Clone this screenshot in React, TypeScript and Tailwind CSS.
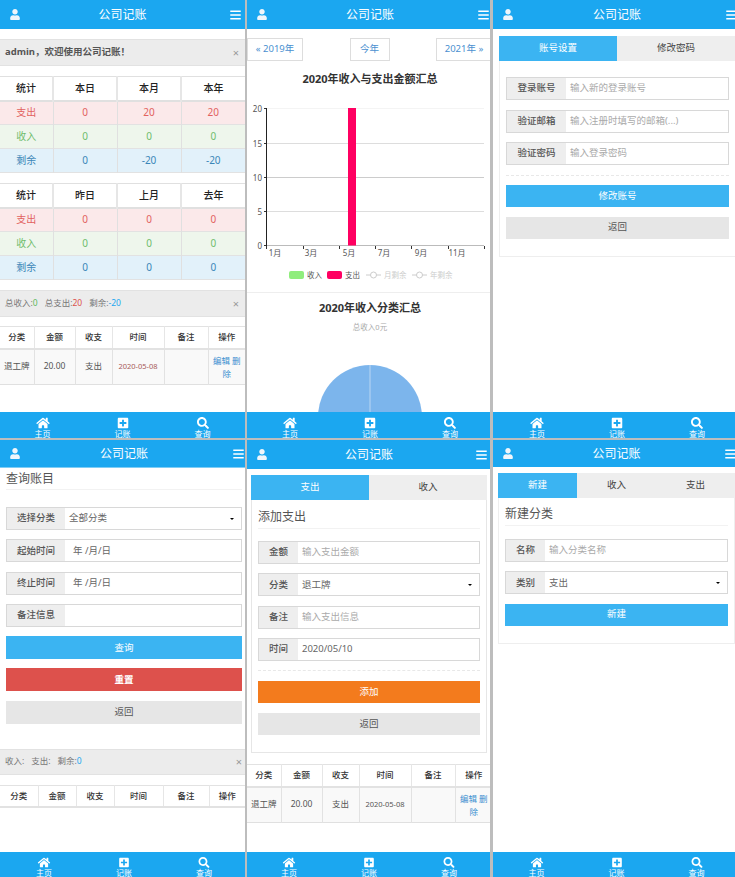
import React from 'react';
import { FaBars, FaHome, FaPlusSquare, FaSearch, FaUser } from 'react-icons/fa';

const Header = ({ h = 'h-[29px]' }: { h?: string }) => (
  <div className={`${h} shrink-0 bg-[#1ba7f0] flex items-center text-white`}>
    <div className="w-[25px] pl-[10px] shrink-0">
      <FaUser className="w-[10px] h-[11px] text-[#f0f6fb]" />
    </div>
    <span className="flex-1 text-center text-[12px]">公司记账</span>
    <div className="w-[25px] pr-[4px] shrink-0 flex justify-end">
      <FaBars className="w-[11px] h-[12px]" />
    </div>
  </div>
);

const Footer = ({ h = 'h-[26px]' }: { h?: string }) => (
  <div className={`${h} mt-auto shrink-0 bg-[#1ba7f0] flex justify-center text-white overflow-hidden`}>
    {[
      { icon: <FaHome className="w-[14px] h-[12px]" />, label: '主页' },
      { icon: <FaPlusSquare className="w-[12px] h-[12px]" />, label: '记账' },
      { icon: <FaSearch className="w-[12px] h-[12px]" />, label: '查询' },
    ].map((item) => (
      <div key={item.label} className="w-20 flex flex-col items-center pt-[5px]">
        {item.icon}
        <span className="text-[8px] leading-[9px]">{item.label}</span>
      </div>
    ))}
  </div>
);

const Alert = ({ children, h = 'h-[27px]' }: { children: React.ReactNode; h?: string }) => (
  <div className={`${h} shrink-0 bg-[#ececec] border-y border-[#e2e2e2] flex items-center justify-between pl-[5px] pr-[6px]`}>
    <div className="text-[8.5px] text-[#777] whitespace-nowrap">{children}</div>
    <span className="text-[11px] leading-none text-[#999]">×</span>
  </div>
);

const statRows = [
  { name: '支出', bg: 'bg-[#fbe9ea]', text: 'text-[#e2625f]' },
  { name: '收入', bg: 'bg-[#eef6ec]', text: 'text-[#70bd6c]' },
  { name: '剩余', bg: 'bg-[#e2f1fa]', text: 'text-[#3b87b8]' },
];

const StatTable = ({ heads, rows }: { heads: string[]; rows: string[][] }) => (
  <table className="w-[245px] table-fixed border-collapse text-center text-[10px] shrink-0">
    <colgroup>
      <col className="w-[53px]" />
      <col className="w-[64px]" />
      <col className="w-[64px]" />
      <col className="w-[64px]" />
    </colgroup>
    <thead>
      <tr className="h-[24px] border-t border-b-2 border-[#e0e0e0]">
        {heads.map((h, i) => (
          <th key={h} className={`p-0 font-medium text-[#222] ${i > 0 ? 'border-l-2 border-[#e6e6e6]' : ''}`}>
            {h}
          </th>
        ))}
      </tr>
    </thead>
    <tbody>
      {statRows.map((row, r) => (
        <tr key={row.name} className={`h-[24px] border-b border-[#e2e2e2] ${row.bg} ${row.text}`}>
          <td className="p-0">{row.name}</td>
          {rows[r].map((v, i) => (
            <td key={i} className="p-0 border-l border-[#e0e0e0]">
              {v}
            </td>
          ))}
        </tr>
      ))}
    </tbody>
  </table>
);

const RecordTable = ({
  widths,
  record,
  dateColor = 'text-[#555]',
}: {
  widths: string[];
  record?: boolean;
  dateColor?: string;
}) => (
  <table className="w-[245px] table-fixed border-collapse text-center text-[8.5px] shrink-0">
    <colgroup>
      {widths.map((w, i) => (
        <col key={i} className={w} />
      ))}
    </colgroup>
    <thead>
      <tr className="h-[22px] border-t border-b-2 border-[#e2e2e2]">
        {['分类', '金额', '收支', '时间', '备注', '操作'].map((h, i) => (
          <th key={h} className={`p-0 font-medium text-[#333] ${i > 0 ? 'border-l border-[#e6e6e6]' : ''}`}>
            {h}
          </th>
        ))}
      </tr>
    </thead>
    {record && (
      <tbody>
        <tr className="h-[36px] bg-[#f9f9f9] border-b border-[#e0e0e0] text-[#555]">
          <td className="p-0">退工牌</td>
          <td className="p-0 border-l border-[#e2e2e2]">20.00</td>
          <td className="p-0 border-l border-[#e2e2e2]">支出</td>
          <td className={`p-0 border-l border-[#e2e2e2] text-[7.5px] ${dateColor}`}>2020-05-08</td>
          <td className="p-0 border-l border-[#e2e2e2]"></td>
          <td className="px-[3px] py-0 border-l border-[#e2e2e2] text-[#3b8fd0] leading-[13px]">编辑 删除</td>
        </tr>
      </tbody>
    )}
  </table>
);

const FormRow = ({
  label,
  labelW,
  value,
  muted,
  select,
  pad = 'pl-[4px]',
}: {
  label: string;
  labelW: string;
  value?: string;
  muted?: boolean;
  select?: boolean;
  pad?: string;
}) => (
  <div className="h-[23px] shrink-0 flex border border-[#d8d8d8] text-[9.5px]">
    <div className={`${labelW} shrink-0 bg-[#eeeeee] flex items-center justify-center font-medium text-[#555]`}>{label}</div>
    <div className={`flex-1 bg-white flex items-center justify-between ${pad} pr-[7px] ${muted ? 'text-[#aaa]' : 'text-[#666]'}`}>
      <span>{value}</span>
      {select && <span className="w-0 h-0 border-x-[2px] border-t-[2px] border-x-transparent border-t-black" />}
    </div>
  </div>
);

const Btn = ({ color, children }: { color: string; children: React.ReactNode }) => (
  <div className={`h-[22px] shrink-0 flex items-center justify-center text-[9.5px] ${color}`}>{children}</div>
);

const Tabs = ({ items, widths }: { items: string[]; widths: string }) => (
  <div className={`h-[25px] shrink-0 flex text-[9.5px] ${widths}`}>
    {items.map((t, i) => (
      <div
        key={t}
        className={`flex-1 flex items-center justify-center ${i === 0 ? 'bg-[#3bb4f2] text-white' : 'bg-[#eeeeee] text-[#444]'}`}
      >
        {t}
      </div>
    ))}
  </div>
);

const Phone = ({ outer, inner, children }: { outer: string; inner: string; children: React.ReactNode }) => (
  <section className={`${outer} h-full overflow-hidden bg-white shrink-0`}>
    <div className={`${inner} h-full flex flex-col`}>{children}</div>
  </section>
);

const Chart = () => {
  const grid = [
    { y: 8.5, label: '20', stroke: '#f4f4f4' },
    { y: 43.5, label: '15', stroke: '#dddddd' },
    { y: 77.5, label: '10', stroke: '#cccccc' },
    { y: 111.5, label: '5', stroke: '#dddddd' },
    { y: 145.5, label: '0', stroke: '#bbbbbb' },
  ];
  const months = [
    { x: 28, t: '1月' },
    { x: 64, t: '3月' },
    { x: 102, t: '5月' },
    { x: 137, t: '7月' },
    { x: 174, t: '9月' },
    { x: 210, t: '11月' },
  ];
  return (
    <svg width="243" height="192" viewBox="0 0 243 192" className="block shrink-0">
      {grid.map((g) => (
        <g key={g.label}>
          <line x1="19" x2="237" y1={g.y} y2={g.y} stroke={g.stroke} strokeWidth="1" />
          <line x1="17" x2="19" y1={g.y} y2={g.y} stroke="#333" strokeWidth="1" />
          <text x="15" y={g.y + 3} textAnchor="end" fontSize="8" fill="#555">
            {g.label}
          </text>
        </g>
      ))}
      <line x1="19.5" x2="19.5" y1="8" y2="146" stroke="#222" strokeWidth="1" />
      {[19, 56, 92, 128, 164, 201, 237].map((x) => (
        <line key={x} x1={x + 0.5} x2={x + 0.5} y1="146" y2="149" stroke="#333" strokeWidth="1" />
      ))}
      {months.map((m) => (
        <text key={m.t} x={m.x} y="156" textAnchor="middle" fontSize="8" fill="#555">
          {m.t}
        </text>
      ))}
      <rect x="101" y="8" width="8" height="137.5" fill="#ff0061" />
      <rect x="42" y="171" width="15" height="8" rx="2" fill="#90ed7d" />
      <text x="60" y="178" fontSize="7.5" fill="#555">收入</text>
      <rect x="80" y="171" width="15" height="8" rx="2" fill="#ff0061" />
      <text x="98" y="178" fontSize="7.5" fill="#555">支出</text>
      <line x1="119" x2="134" y1="175" y2="175" stroke="#ccc" />
      <circle cx="126.5" cy="175" r="3" fill="#fff" stroke="#ccc" />
      <text x="137" y="178" fontSize="7.5" fill="#ccc">月剩余</text>
      <line x1="165" x2="180" y1="175" y2="175" stroke="#ccc" />
      <circle cx="172.5" cy="175" r="3" fill="#fff" stroke="#ccc" />
      <text x="183" y="178" fontSize="7.5" fill="#ccc">年剩余</text>
    </svg>
  );
};

const Pie = () => (
  <svg width="104" height="47" viewBox="0 0 104 47" className="block shrink-0 mx-auto mt-[33px]">
    <circle cx="52" cy="52" r="52" fill="#7cb5ec" />
    <line x1="52" x2="52" y1="0" y2="47" stroke="#b9d6f3" strokeWidth="1" />
  </svg>
);

const recordWidths = ['w-[34px]', 'w-[41px]', 'w-[37px]', 'w-[52px]', 'w-[44px]', 'w-[37px]'];

export default function App() {
  return (
    <div className="w-[735px] h-[877px] bg-[#bdbdbd] flex flex-col gap-[2px] overflow-hidden font-['Noto_Sans','Noto_Sans_CJK_SC',sans-serif]">
      {/* top row */}
      <div className="h-[438px] flex shrink-0">
        <Phone outer="w-[245px]" inner="w-[245px]">
          <Header />
          <div className="h-[10px] shrink-0" />
          <Alert>
            <span className="text-[9.5px] font-bold text-[#555]">admin，欢迎使用公司记账！</span>
          </Alert>
          <div className="h-[10px] shrink-0" />
          <StatTable heads={['统计', '本日', '本月', '本年']} rows={[['0', '20', '20'], ['0', '0', '0'], ['0', '-20', '-20']]} />
          <div className="h-[10px] shrink-0" />
          <StatTable heads={['统计', '昨日', '上月', '去年']} rows={[['0', '0', '0'], ['0', '0', '0'], ['0', '0', '0']]} />
          <div className="h-[10px] shrink-0" />
          <Alert>
            总收入:<span className="text-[#5eb95e]">0</span>
            <span className="ml-[7px]">总支出:</span>
            <span className="text-[#dd514c]">20</span>
            <span className="ml-[7px]">剩余:</span>
            <span className="text-[#1ba7f0]">-20</span>
          </Alert>
          <div className="h-[9px] shrink-0" />
          <RecordTable widths={recordWidths} record dateColor="text-[#a85a5a]" />
          <Footer />
        </Phone>

        <Phone outer="w-[243px] ml-[2px]" inner="w-[246px]">
          <Header />
          <div className="w-[245px] flex justify-between mt-[9px] shrink-0 text-[9.5px] text-[#4a90d0]">
            <div className="w-[56px] h-[23px] border border-[#dddddd] flex items-center justify-center">« 2019年</div>
            <div className="w-[40px] h-[23px] border border-[#dddddd] flex items-center justify-center">今年</div>
            <div className="w-[56px] h-[23px] border border-[#dddddd] flex items-center justify-center">2021年 »</div>
          </div>
          <div className="text-center text-[11px] leading-[16px] font-bold text-[#333] mt-[10px] shrink-0">2020年收入与支出金额汇总</div>
          <div className="h-[13px] shrink-0" />
          <Chart />
          <div className="h-px shrink-0 bg-[#eeeeee]" />
          <div className="text-center text-[11px] leading-[16px] font-bold text-[#333] mt-[7px] shrink-0">2020年收入分类汇总</div>
          <div className="text-center text-[7.5px] leading-[10px] text-[#aaa] mt-[6px] shrink-0">总收入0元</div>
          <Pie />
          <Footer />
        </Phone>

        <Phone outer="w-[242px] ml-[3px]" inner="w-[248px]">
          <Header />
          <div className="ml-[6px] w-[236px] mt-[7px] flex-none">
            <Tabs items={['账号设置', '修改密码']} widths="w-[236px] h-[24px]" />
            <div className="h-[196px] border-l border-b border-[#eeeeee] px-[6px] pt-[16px] flex flex-col gap-[9.5px]">
              <FormRow label="登录账号" labelW="w-[59px]" value="输入新的登录账号" muted />
              <FormRow label="验证邮箱" labelW="w-[59px]" value="输入注册时填写的邮箱(...)" muted />
              <FormRow label="验证密码" labelW="w-[59px]" value="输入登录密码" muted />
              <div className="border-t border-dashed border-[#e8e8e8]" />
              <Btn color="bg-[#3bb4f2] text-white">修改账号</Btn>
              <Btn color="bg-[#e6e6e6] text-[#555]">返回</Btn>
            </div>
          </div>
          <Footer />
        </Phone>
      </div>

      {/* bottom row */}
      <div className="h-[437px] flex shrink-0">
        <Phone outer="w-[245px]" inner="w-[248px]">
          <Header h="h-[28px] border-b border-[#7fcdf5]" />
          <div className="mx-[6px] h-[22px] shrink-0 flex items-center text-[12px] text-[#555] border-b border-[#f2f2f2]">查询账目</div>
          <div className="mx-[6px] mt-[17px] shrink-0 flex flex-col gap-[9.3px]">
            <FormRow label="选择分类" labelW="w-[58px]" value="全部分类" select />
            <FormRow label="起始时间" labelW="w-[58px]" value="年 /月/日" pad="pl-[8px]" />
            <FormRow label="终止时间" labelW="w-[58px]" value="年 /月/日" pad="pl-[8px]" />
            <FormRow label="备注信息" labelW="w-[58px]" />
            <Btn color="bg-[#3bb4f2] text-white h-[23px]">查询</Btn>
            <Btn color="bg-[#dd514c] text-white font-bold h-[23px]">重置</Btn>
            <Btn color="bg-[#e6e6e6] text-[#555] h-[23px]">返回</Btn>
          </div>
          <div className="h-[25px] shrink-0" />
          <Alert h="h-[26px]">
            收入:
            <span className="ml-[7px]">支出:</span>
            <span className="ml-[7px]">剩余:</span>
            <span className="text-[#1ba7f0]">0</span>
          </Alert>
          <div className="h-[10px] shrink-0" />
          <RecordTable widths={['w-[38px]', 'w-[38px]', 'w-[38px]', 'w-[49px]', 'w-[46px]', 'w-[36px]']} />
          <Footer h="h-[25px]" />
        </Phone>

        <Phone outer="w-[243px] ml-[2px]" inner="w-[244px]">
          <Header />
          <div className="ml-[4px] mt-[6px] w-[236px] shrink-0">
            <Tabs items={['支出', '收入']} widths="w-[236px]" />
            <div className="h-[253px] border-x border-b border-[#e6e6e6] px-[6px]">
              <div className="h-[29px] pt-[5px] flex items-center text-[12px] text-[#555] border-b border-[#f2f2f2]">添加支出</div>
              <div className="mt-[12px] flex flex-col gap-[9.3px]">
                <FormRow label="金额" labelW="w-[39px]" value="输入支出金额" muted />
                <FormRow label="分类" labelW="w-[39px]" value="退工牌" select />
                <FormRow label="备注" labelW="w-[39px]" value="输入支出信息" muted />
                <FormRow label="时间" labelW="w-[39px]" value="2020/05/10" />
                <div className="border-t border-dashed border-[#e8e8e8]" />
                <Btn color="bg-[#f37b1d] text-white mt-[0.5px]">添加</Btn>
                <Btn color="bg-[#e6e6e6] text-[#555] mt-[0.5px]">返回</Btn>
              </div>
            </div>
          </div>
          <div className="h-[11px] shrink-0" />
          <RecordTable widths={recordWidths} record />
          <Footer h="h-[25px]" />
        </Phone>

        <Phone outer="w-[242px] ml-[3px]" inner="w-[247px]">
          <Header h="h-[27px]" />
          <div className="ml-[5px] mt-[6px] w-[237px] shrink-0">
            <Tabs items={['新建', '收入', '支出']} widths="w-[237px]" />
            <div className="h-[146px] border-x border-b border-[#eeeeee] px-[6px]">
              <div className="h-[28px] pt-[5px] flex items-center text-[12px] text-[#555] border-b border-[#f2f2f2]">新建分类</div>
              <div className="mt-[13px] flex flex-col gap-[9.3px]">
                <FormRow label="名称" labelW="w-[39px]" value="输入分类名称" muted />
                <FormRow label="类别" labelW="w-[39px]" value="支出" select />
                <Btn color="bg-[#3bb4f2] text-white">新建</Btn>
              </div>
            </div>
          </div>
          <Footer h="h-[25px]" />
        </Phone>
      </div>
    </div>
  );
}
